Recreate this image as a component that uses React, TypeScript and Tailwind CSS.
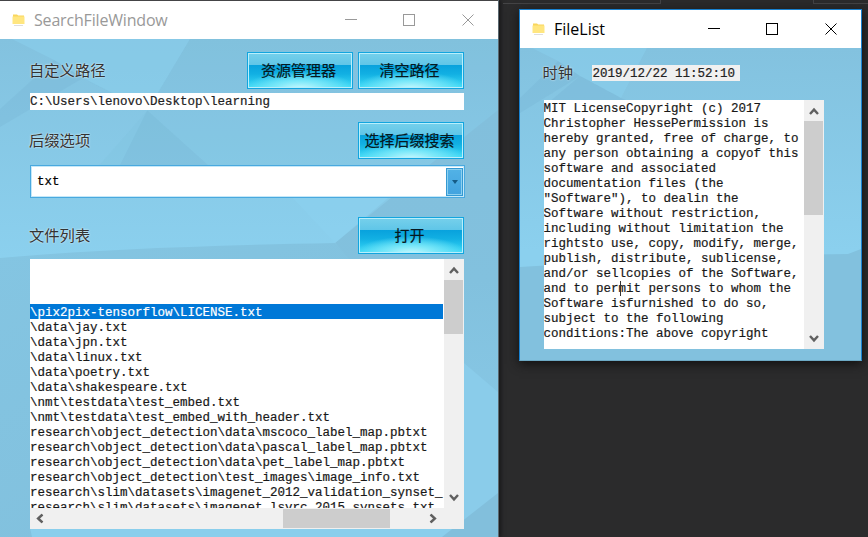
import type { ReactNode } from "react";

const files = [
  "",
  "",
  "",
  "\\pix2pix-tensorflow\\LICENSE.txt",
  "\\data\\jay.txt",
  "\\data\\jpn.txt",
  "\\data\\linux.txt",
  "\\data\\poetry.txt",
  "\\data\\shakespeare.txt",
  "\\nmt\\testdata\\test_embed.txt",
  "\\nmt\\testdata\\test_embed_with_header.txt",
  "research\\object_detection\\data\\mscoco_label_map.pbtxt",
  "research\\object_detection\\data\\pascal_label_map.pbtxt",
  "research\\object_detection\\data\\pet_label_map.pbtxt",
  "research\\object_detection\\test_images\\image_info.txt",
  "research\\slim\\datasets\\imagenet_2012_validation_synset_",
  "research\\slim\\datasets\\imagenet_lsvrc_2015_synsets.txt",
];

const license = [
  "MIT LicenseCopyright (c) 2017",
  "Christopher HessePermission is",
  "hereby granted, free of charge, to",
  "any person obtaining a copyof this",
  "software and associated",
  "documentation files (the",
  "\"Software\"), to dealin the",
  "Software without restriction,",
  "including without limitation the",
  "rightsto use, copy, modify, merge,",
  "publish, distribute, sublicense,",
  "and/or sellcopies of the Software,",
  "and to permit persons to whom the",
  "Software isfurnished to do so,",
  "subject to the following",
  "conditions:The above copyright",
];

const mono =
  "font-['Liberation_Mono','Noto_Sans_CJK_SC',monospace] text-[12.5px] leading-[15px] whitespace-pre [-webkit-text-stroke:0.2px_currentColor]";

function Folder() {
  return (
    <svg width="14" height="14" viewBox="0 0 14 14" className="shrink-0">
      <path d="M1 1.5h4l1.2 1H12v8.5H1z" fill="#f9d65c" />
      <path d="M.5 3.5h12v7.5H.5z" fill="#ffe680" />
      <path d="M2 12.5h9" stroke="#dedede" />
    </svg>
  );
}

function TitleBar({ title, active }: { title: string; active?: boolean }) {
  return (
    <div className={`flex h-[38px] shrink-0 items-center bg-white pl-3 ${active ? "text-black" : "text-[#999]"}`}>
      <Folder />
      <span
        className={`ml-2 flex-1 pb-px font-['Open_Sans',sans-serif] text-[16px] leading-5 ${active ? "" : "tracking-[-0.18px]"}`}
      >
        {title}
      </span>
      <svg width="156" height="38" fill="none" stroke="currentColor" className="shrink-0">
        <path d="M3 18.5h12M61.5 13.5h11v11h-11z" shapeRendering="crispEdges" />
        <path d="M120.5 13.5l11 11m0-11l-11 11" />
      </svg>
    </div>
  );
}

function SearchBackdrop() {
  return (
    <svg viewBox="0 0 498 498" className="col-start-1 row-start-1 h-full w-full">
      <defs>
        <linearGradient id="sky" x1="0" y1="0" x2="0" y2="219" gradientUnits="userSpaceOnUse">
          <stop offset="0" stopColor="#83c2df" />
          <stop offset="1" stopColor="#8bd0ee" />
        </linearGradient>
        <linearGradient id="ground" x1="0" y1="0" x2="1" y2="1">
          <stop offset="0" stopColor="#84c5e2" />
          <stop offset="1" stopColor="#80bedb" />
        </linearGradient>
        <linearGradient id="side" x1="0" y1="0" x2="0" y2="1">
          <stop offset="0" stopColor="#82bfdc" />
          <stop offset=".4" stopColor="#82c1de" />
          <stop offset="1" stopColor="#8accea" />
        </linearGradient>
      </defs>
      <path fill="url(#sky)" d="M0 0h498v498H0z" />
      <path fill="#8acfed" opacity=".55" d="M12 0h93L54 21zM105 0h85l-43 72-64-33-29-18z" />
      <path fill="#74afcf" opacity=".25" d="M83 39L0 88V70l54-49z" />
      <path fill="#74afcf" opacity=".25" d="M83 39l65 33 60 54h-88l27-54z" />
      <path fill="#7cbad7" opacity=".15" d="M190 0h308v75l-110 84-300-20 59-67z" />
      <path fill="url(#ground)" d="M0 219q120-11 335-15l18 17 145 50v227H0z" />
      <path fill="url(#side)" d="M335 204l53-45L498 71v427L350 221z" />
      <path fill="#8cd1ef" opacity=".5" d="M262 126h170l-97 78z" />
      <path fill="#8accea" d="M464 324l34 29v107l-34 24z" />
      <path fill="#8aceec" d="M30 489h435l33-29v38H32z" />
      <path fill="#82bfdc" d="M442 498l56-44v44z" />
    </svg>
  );
}

function FileBackdrop() {
  return (
    <svg viewBox="0 0 341 312" className="col-start-1 row-start-1 h-full w-full">
      <defs>
        <linearGradient id="fileSky" x1="0" y1="0" x2="0" y2="1">
          <stop offset="0" stopColor="#83c2df" />
          <stop offset=".65" stopColor="#8bd0ee" />
        </linearGradient>
      </defs>
      <path fill="url(#fileSky)" d="M0 0h341v312H0z" />
      <path fill="#8acfed" opacity=".5" d="M12 0h93L38 13zM105 0h22l-26 50-41-22-22-15z" />
      <path fill="#74afcf" opacity=".28" d="M60 28L0 65V50l38-37z" />
      <path fill="#74afcf" opacity=".3" d="M60 28l41 22 10 4H29z" />
      <path fill="#82c1de" d="M0 219l180-11 148-2 13-5v111H0z" />
    </svg>
  );
}

function GlossyButton({ children }: { children: ReactNode }) {
  return (
    <button className="flex h-[37px] w-[106px] shrink-0 items-center justify-center border border-[#12a5df] bg-[radial-gradient(ellipse_55%_52%_at_50%_104%,#d0fbff_0%,#7ce8f9_45%,transparent_100%),linear-gradient(180deg,#76d0eb_0%,#60c6e8_33%,#08a2dd_35%,#12b0e3_60%,#3cdcf8_100%)] pr-[3px] pb-[2px] font-['Noto_Sans_CJK_SC',sans-serif] text-[15px] leading-none text-[#061820] shadow-[inset_0_0_0_1px_#b8effc] [-webkit-text-stroke:0.2px_#061820]">
      {children}
    </button>
  );
}

function Chevron({ className = "" }: { className?: string }) {
  return (
    <svg width="10" height="9" viewBox="0 0 10 9" fill="none" stroke="#606060" strokeWidth="2.4" className={className}>
      <path d="M1 7l4-4.4L9 7" />
    </svg>
  );
}

function VerticalBar({ thumb }: { thumb: string }) {
  return (
    <div className="flex w-5 shrink-0 flex-col items-center bg-[#f0f0f0]">
      <div className="flex h-[21px] shrink-0 items-center pt-0.5">
        <Chevron />
      </div>
      <div className={`mr-px w-[19px] shrink-0 bg-[#cdcdcd] ${thumb}`} />
      <div className="flex-1" />
      <div className="flex h-[21px] items-center">
        <Chevron className="rotate-180" />
      </div>
    </div>
  );
}

function Label({ children }: { children: ReactNode }) {
  return (
    <span className="-ml-px flex-1 pb-[4px] font-['Noto_Sans_CJK_SC',sans-serif] text-[15.3px] leading-5 text-[#333] [text-shadow:0_0_2px_#fff]">
      {children}
    </span>
  );
}

function SearchWindow() {
  return (
    <section className="flex h-[537px] w-[498px] shrink-0 flex-col border-t border-[#444446] bg-white shadow-[1px_0_0_#5a6870,3px_0_4px_#18181a]">
      <TitleBar title="SearchFileWindow" />
      <div className="grid h-[498px] grid-cols-1 grid-rows-1">
        <SearchBackdrop />
        <div className="col-start-1 row-start-1 flex flex-col pt-[13px] pr-[34px] pl-[30px]">
          <div className="flex h-[37px] items-center gap-[5px]">
            <Label>自定义路径</Label>
            <GlossyButton>资源管理器</GlossyButton>
            <GlossyButton>清空路径</GlossyButton>
          </div>
          <div className={`mt-[4px] h-[17px] bg-white pt-[2px] text-[#222] ${mono}`}>C:\Users\lenovo\Desktop\learning</div>
          <div className="mt-[12px] flex h-[37px] items-center">
            <Label>后缀选项</Label>
            <GlossyButton>选择后缀搜索</GlossyButton>
          </div>
          <div className="mt-[6px] -mr-px flex h-[33px] items-center border border-[#49a9df] bg-white pr-px pl-[6px] shadow-[inset_0_0_0_1px_#c5e8f8]">
            <span className={`flex-1 pt-[2px] ${mono}`}>txt</span>
            <span className="flex h-[28px] w-[17px] items-center justify-center border border-[#3499d2] bg-linear-to-b from-[#52b2e6] to-[#42a3df] shadow-[inset_0_0_0_1px_#8dd0f0]">
              <svg width="6" height="4">
                <path d="M0 0h6L3 4z" fill="#155b86" />
              </svg>
            </span>
          </div>
          <div className="mt-[19px] flex h-[37px] items-center">
            <Label>文件列表</Label>
            <GlossyButton>打开</GlossyButton>
          </div>
          <div className="mt-[5px] flex h-[270px] flex-col bg-white">
            <div className="flex h-[249px]">
              <div className={`w-[414px] overflow-hidden ${mono}`}>
                {files.map((file, i) => (
                  <div key={i} className={`mr-px h-[15px] pt-[2px] ${i === 3 ? "bg-[#0078d7] text-white" : "text-[#181818]"}`}>
                    {file}
                  </div>
                ))}
              </div>
              <VerticalBar thumb="h-[54px]" />
            </div>
            <div className="flex h-[21px] items-center bg-[#f0f0f0] pr-[26px] pl-[5px]">
              <Chevron className="-rotate-90" />
              <div className="ml-[238px] h-[19px] w-[107px] bg-[#cdcdcd]" />
              <div className="flex-1" />
              <Chevron className="rotate-90" />
            </div>
          </div>
        </div>
      </div>
    </section>
  );
}

function FileWindow() {
  return (
    <section className="mt-[9px] ml-[21px] flex h-[352px] w-[343px] shrink-0 flex-col border border-[#1881d0] border-b-[#6daac5] shadow-[0_3px_10px_#111]">
      <TitleBar title="FileList" active />
      <div className="grid h-[312px] grid-cols-1 grid-rows-1">
        <FileBackdrop />
        <div className="col-start-1 row-start-1 flex flex-col pt-[17px] pl-[23.5px]">
          <div className="flex h-4 items-center">
            <div className="flex w-12">
              <Label>时钟</Label>
            </div>
            <div className={`h-[16px] w-[148px] bg-[#f0f0f0] pt-[2px] pl-px text-[#222] ${mono}`}>2019/12/22 11:52:10</div>
          </div>
          <div className="mt-[19px] flex h-[249px] w-[280px] bg-white">
            <div className={`relative flex-1 overflow-hidden pt-[2px] text-[#181818] ${mono}`}>
              {license.map((line) => (
                <div key={line}>{line}</div>
              ))}
              <span className="absolute top-[181px] left-[76px] h-[15px] w-px bg-[#333]" />
            </div>
            <VerticalBar thumb="h-[94px]" />
          </div>
        </div>
      </div>
    </section>
  );
}

export default function App() {
  return (
    <main className="flex h-[537px] w-[868px] items-start overflow-hidden bg-[#2b2b2c]">
      <SearchWindow />
      <div className="flex flex-1 flex-col">
        <div className="-mb-1 ml-[5px] flex h-1 justify-between">
          <div className="w-[158px] border-r border-b border-[#444446]" />
          <div className="w-[55px] border-b border-l border-[#444446]" />
        </div>
        <FileWindow />
      </div>
    </main>
  );
}
